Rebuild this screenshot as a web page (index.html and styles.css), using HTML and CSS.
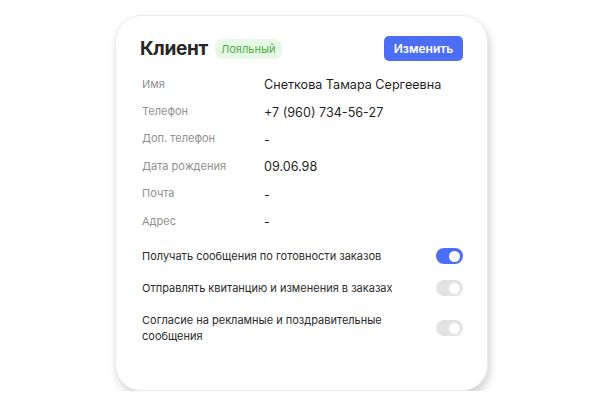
FILE: index.html
```html
<!DOCTYPE html>
<html lang="ru">
<head>
<meta charset="utf-8">
<title>Клиент</title>
<link rel="stylesheet" href="styles.css">
</head>
<body>
<div class="card">
  <div class="header">
    <div class="title-group">
      <h1 class="title">Клиент</h1>
      <span class="badge">Лояльный</span>
    </div>
    <button class="btn">Изменить</button>
  </div>
  <div class="info">
    <div class="row"><span class="label">Имя</span><span class="value">Снеткова Тамара Сергеевна</span></div>
    <div class="row"><span class="label">Телефон</span><span class="value">+7 (960) 734-56-27</span></div>
    <div class="row"><span class="label">Доп. телефон</span><span class="value">-</span></div>
    <div class="row"><span class="label">Дата рождения</span><span class="value">09.06.98</span></div>
    <div class="row"><span class="label">Почта</span><span class="value">-</span></div>
    <div class="row"><span class="label">Адрес</span><span class="value">-</span></div>
  </div>
  <div class="settings">
    <div class="setting"><span class="setting-text">Получать сообщения по готовности заказов</span><span class="toggle on"></span></div>
    <div class="setting"><span class="setting-text">Отправлять квитанцию и изменения в заказах</span><span class="toggle"></span></div>
    <div class="setting"><span class="setting-text">Согласие на рекламные и поздравительные сообщения</span><span class="toggle"></span></div>
  </div>
</div>
</body>
</html>
```
FILE: styles.css
```css
* { box-sizing: border-box; }
html, body { margin: 0; padding: 0; background: #fff; }
body {
  font-family: Inter, "Noto Sans", sans-serif;
  padding-top: 15px;
  display: flex;
  justify-content: center;
}
.card {
  width: 373px;
  height: 376px;
  margin-right: 2px;
  background: #fff;
  border-radius: 26px;
  border: 1px solid #ececec;
  box-shadow: 2px 5px 9px rgba(0,0,0,0.18);
  padding: 20px 24px 0 24px;
}
.header {
  display: flex;
  justify-content: space-between;
  align-items: center;
  height: 25px;
}
.title-group { display: flex; align-items: center; gap: 7px; }
.title {
  margin: 0;
  font-size: 19px;
  font-weight: 700;
  color: #262626;
  letter-spacing: -0.3px;
}
.badge {
  background: #e8f8e6;
  color: #4fae47;
  font-size: 11px;
  border-radius: 8px;
  padding: 3px 6px;
  line-height: 14px;
}
.btn {
  border: none;
  background: #4c6ef5;
  color: #fff;
  font-family: inherit;
  font-size: 12px;
  font-weight: 600;
  border-radius: 5px;
  width: 79px;
  height: 25px;
  padding: 0;
}
.info {
  margin-top: 10px;
  display: flex;
  flex-direction: column;
}
.row {
  display: grid;
  grid-template-columns: 122px 1fr;
  height: 27.4px;
  align-items: center;
  padding-left: 2px;
}
.label {
  font-size: 11px;
  color: #909090;
  position: relative;
  top: -1px;
}
.value {
  font-size: 12.6px;
  color: #1f1f1f;
}
.settings {
  margin-top: 13px;
  display: flex;
  flex-direction: column;
  gap: 16px;
}
.setting {
  display: flex;
  justify-content: space-between;
  align-items: center;
  padding-left: 2px;
}
.setting-text {
  font-size: 11px;
  line-height: 16px;
  color: #2b2b2b;
  max-width: 262px;
}
.toggle {
  width: 27px;
  height: 16px;
  border-radius: 8px;
  background: #e3e3e3;
  position: relative;
  flex-shrink: 0;
}
.toggle::after {
  content: "";
  position: absolute;
  right: 3px;
  top: 2.5px;
  width: 11px;
  height: 11px;
  border-radius: 50%;
  background: #fff;
}
.toggle.on { background: #4c6ef5; }
```
